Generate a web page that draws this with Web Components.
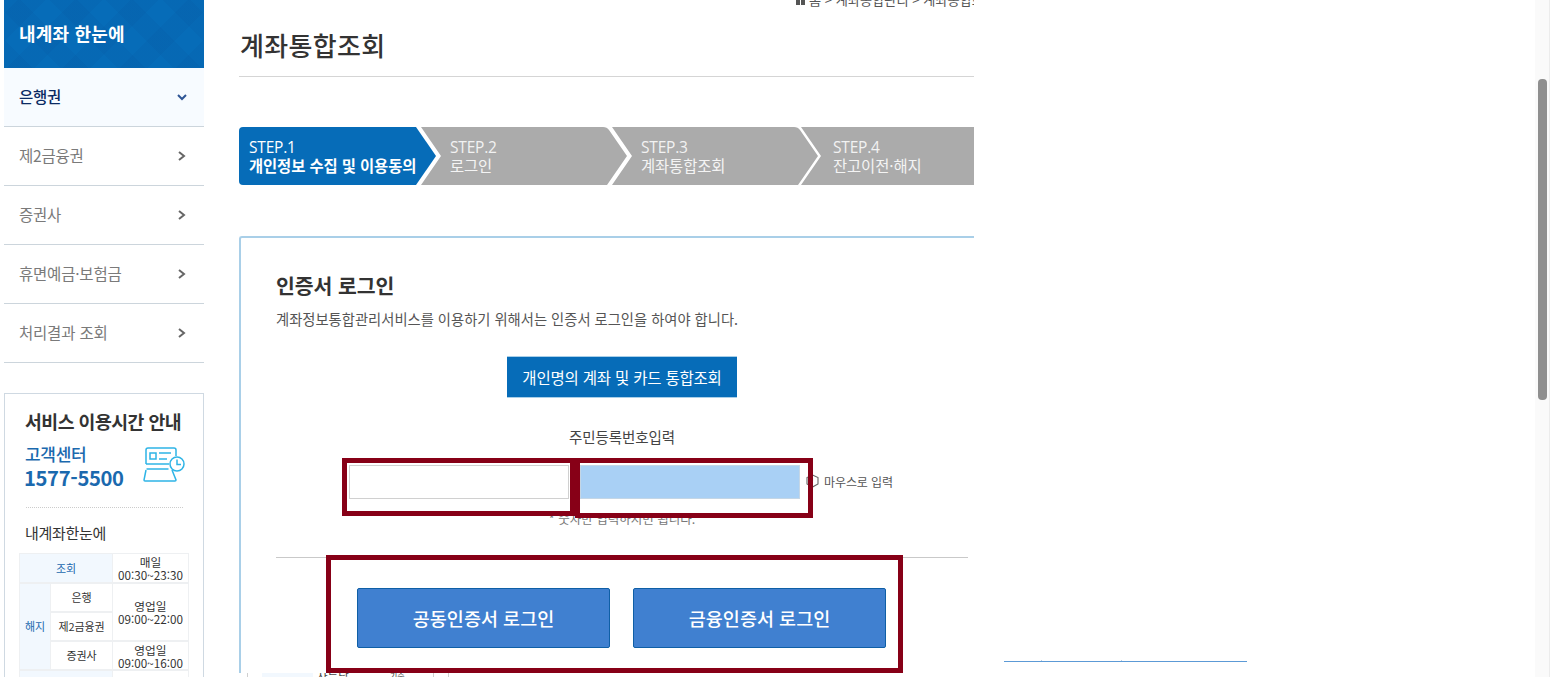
<!DOCTYPE html>
<html lang="ko"><head><meta charset="utf-8"><title>계좌통합조회</title>
<style>
html,body{margin:0;padding:0;height:677px;overflow:hidden;background:#fff;font-family:"Noto Sans CJK KR","Noto Sans",sans-serif;color:#333}
body{display:flex;align-items:flex-start}
</style></head><body>
<side-nav>
  <nav-item open>은행권</nav-item>
  <nav-item>제2금융권</nav-item>
  <nav-item>증권사</nav-item>
  <nav-item>휴면예금·보험금</nav-item>
  <nav-item>처리결과 조회</nav-item>
  <service-box></service-box>
</side-nav>
<main-area>
  <step-bar>
    <step-item n="1" active>개인정보 수집 및 이용동의</step-item>
    <step-item n="2">로그인</step-item>
    <step-item n="3">계좌통합조회</step-item>
    <step-item n="4" last>잔고이전·해지</step-item>
  </step-bar>
  <login-panel></login-panel>
  <bottom-strip></bottom-strip>
  <red-frame style="left:103px;top:458px;width:233px;height:58px"></red-frame>
  <red-frame style="left:336px;top:458px;width:238px;height:60px"></red-frame>
  <red-frame style="left:87px;top:555px;width:577px;height:118px"></red-frame>
</main-area>
<right-pane></right-pane>
<script>
function def(name,html){
  customElements.define(name,class extends HTMLElement{
    constructor(){super();const s=this.attachShadow({mode:'open'});s.innerHTML=html;}
  });
}
def('side-nav',`<style>
:host{display:block;width:200px;margin-left:4px;flex:none;height:677px;overflow:hidden}
.h{height:68px;box-sizing:border-box;padding:0 0 2px 15px;display:flex;align-items:center;color:#fff;font-size:18px;font-weight:700;letter-spacing:.2px;
background-color:#066cb8;background-image:repeating-linear-gradient(45deg,rgba(0,60,130,.07) 0 20px,transparent 20px 40px),repeating-linear-gradient(-45deg,rgba(0,60,130,.07) 0 20px,transparent 20px 40px)}
</style><div class="h">내계좌 한눈에</div><slot></slot>`);
class NavItem extends HTMLElement{
  constructor(){super();const s=this.attachShadow({mode:'open'});
  const open=this.hasAttribute('open');
  s.innerHTML=`<style>
  :host{display:flex;align-items:center;justify-content:space-between;height:59px;box-sizing:border-box;border-bottom:1px solid #ccd5dc;padding:0 17px 2px 15px;font-size:15.500px;letter-spacing:-.2px;color:${open?'#0b2a63':'#7a7a7a'};font-weight:${open?500:400};background:${open?'#f7fbff':'#fff'}}
  svg{display:block;width:10px;height:12px;margin-top:2px}
  </style><slot></slot>
  <svg viewBox="0 0 10 12">${open?'<path d="M1 4l4 4 4-4" fill="none" stroke="#2f5595" stroke-width="2"/>':'<path d="M2 2l5 4-5 4" fill="none" stroke="#666" stroke-width="2"/>'}</svg>`;}
}
customElements.define('nav-item',NavItem);
def('service-box',`<style>
:host{display:block;margin-top:30px;box-sizing:border-box;height:330px;border:1px solid #cfd9e2;border-width:1.5px;padding:0 14px;background:#fff}
.t{font-size:18.300px;font-weight:700;letter-spacing:-.5px;color:#333;margin:14px 0 0 6px;line-height:26px;white-space:nowrap}
.c{display:flex;justify-content:space-between;margin:10px 4px 0 6px}
.c1{font-size:17px;font-weight:500;color:#1b69ae;line-height:20px;letter-spacing:-.3px}
.c2{font-size:20.200px;font-weight:700;color:#1b69ae;line-height:26px;margin:1px 0 0 -1px;letter-spacing:-.35px}
svg{display:block;width:42px;height:36px;margin-top:3px}
.d{border-top:1px dotted #ccc;margin:16px 6px 0 7px}
.s{font-size:15px;color:#333;line-height:20px;margin:15px 0 0 6px;letter-spacing:-.3px}
.g{display:grid;grid-template-columns:30px 61px 75px;grid-template-rows:28px 27px 27px 27px 40px;gap:2px 1px;background:#eef0f2;padding:1px;margin:10px 0 0 0;width:168px;font-size:11px;line-height:13px;color:#333;text-align:center;letter-spacing:-.1px}
.g div{background:#fff;display:flex;align-items:center;justify-content:center}
.g .w{font-size:11.700px;letter-spacing:0}
.g .b{background:#f2f8fe;color:#1b69ae}
</style>
<div class="t">서비스 이용시간 안내</div>
<div class="c"><div><div class="c1">고객센터</div><div class="c2">1577-5500</div></div>
<svg viewBox="0 0 42 36" fill="none" stroke="#2eb4e6" stroke-width="1.500"><path d="M3 17V3q0-2 2-2h26q2 0 2 2v6"/><path d="M3 17h23"/><rect x="7" y="6" width="6" height="6"/><path d="M16 6h12M16 12h8"/><path d="M3.500 22h22M29 23l4 10q0 1-1 1H2q-1 0-1-1l2-10"/><circle cx="34" cy="17" r="7" fill="#fff"/><path d="M34 12.500V17.500h4"/></svg></div>
<div class="d"></div>
<div class="s">내계좌한눈에</div>
<div class="g">
<div class="b" style="grid-area:1/1/2/3">조회</div><div class="w" style="grid-area:1/3/2/4">매일<br>00:30~23:30</div>
<div class="b" style="grid-area:2/1/5/2">해지</div>
<div style="grid-area:2/2/3/3">은행</div>
<div class="w" style="grid-area:2/3/4/4">영업일<br>09:00~22:00</div>
<div style="grid-area:3/2/4/3">제2금융권</div>
<div style="grid-area:4/2/5/3">증권사</div>
<div class="w" style="grid-area:4/3/5/4">영업일<br>09:00~16:00</div>
<div class="b" style="grid-area:5/1/6/3"></div><div style="grid-area:5/3/6/4"></div>
</div>`);
def('main-area',`<style>
:host{display:block;position:relative;flex:none;width:735px;height:677px;margin-left:35px;overflow:hidden}
.bc{display:flex;align-items:center;gap:3px;height:14px;margin:-7px 0 0 557px;font-size:13.200px;color:#555;white-space:nowrap;line-height:14px}
.bc i{display:block;flex:none;width:4px;height:9px;background:#555;box-shadow:5px 0 #555;margin-right:6px}
h1{margin:-1px 0 0;font-size:26px;font-weight:500;line-height:36px;color:#333;padding:21px 0 13px 1px;border-bottom:1px solid #d5d5d5;letter-spacing:.35px}
</style>
<div class="bc"><i></i>홈 &gt; 계좌통합관리 &gt; 계좌통합조회</div>
<h1>계좌통합조회</h1>
<slot></slot>`);
def('step-bar',`<style>:host{display:flex;margin-top:50px;height:58px}</style><slot></slot>`);
class StepItem extends HTMLElement{
  constructor(){super();const s=this.attachShadow({mode:'open'});
  const n=this.getAttribute('n'),active=n==='1',last=this.hasAttribute('last');
  const clip=active?"M4 0H177L197 29L177 58H4Q0 58 0 54V4Q0 0 4 0Z":
    last?"M0 0H300V58H0L20 29Z":"M0 0H182Q186 0 188 3L206 29L186 58H0L20 29Z";
  const w=active?197:last?300:206;
  const ml={1:0,2:-15,3:-15,4:-17}[n];
  const pl=active?10:last?32:29;
  s.innerHTML=`<style>:host{display:block;flex:none;box-sizing:border-box;width:${w}px;height:58px;margin-left:${ml}px;padding:11px 0 0 ${pl}px;background:${active?'#066cb8':'#ababab'};color:#fff;clip-path:path('${clip}');font-size:15.400px;line-height:18px;white-space:nowrap;letter-spacing:-.1px}
  .n{font-family:"Open Sans","Noto Sans",sans-serif;font-size:15.500px;letter-spacing:-.2px;color:${active?'#fff':'#f2f2f2'}}
  .l{font-weight:${active?700:400};color:${active?'#fff':'#f4f4f4'}}</style>
  <div class="n">STEP.${n}</div><div class="l"><slot></slot></div>`;}
}
customElements.define('step-item',StepItem);
def('login-panel',`<style>
:host{display:block;box-sizing:border-box;width:800px;height:437px;margin-top:51px;border:solid #a9cfe8;border-width:2px 0 0 2px;border-top-left-radius:3px;padding:33px 0 0 35px;overflow:hidden;background:#fff}
h2{margin:0;font-size:20.500px;font-weight:700;line-height:28px;color:#333;letter-spacing:-.1px}
p{margin:10px 0 0;font-size:14.300px;line-height:20px;color:#555;letter-spacing:0;white-space:nowrap}
.bb{box-sizing:border-box;width:230px;height:42px;margin:27px 0 0 231px;background:#066cb8;border:solid #a9cfe8;border-width:1px 0;color:#fff;font-size:15.500px;display:flex;align-items:center;justify-content:center;letter-spacing:-.2px;white-space:nowrap}
.lab{text-align:center;width:692px;margin-top:29px;font-size:14.500px;line-height:20px;color:#444;letter-spacing:-.1px}
.row{display:flex;align-items:center;margin:18px 0 0 73px}
.in{box-sizing:border-box;width:220px;height:34px;border:1px solid #d0d0d0;background:#fff}
.in.b{margin-left:11px;background:#a9d0f5;border-color:#c4d6e6}
.m{display:flex;align-items:center;gap:5px;margin:-2px 0 0 6px;font-size:12px;color:#555;white-space:nowrap;letter-spacing:-.1px}
.m svg{width:13px;height:14px;display:block}
.note{width:692px;text-align:center;font-size:12.500px;line-height:14px;color:#777;margin-top:13px}
hr{border:0;border-top:1px solid #c9c9c9;width:692px;margin:31px 0 0}
.bt{display:flex;gap:23px;margin:30px 0 0 81px}
.bt div{box-sizing:border-box;width:253px;height:60px;background:#4080d0;border:1px solid #0f5fa6;border-radius:2px;color:#fff;font-size:18.500px;display:flex;align-items:center;justify-content:center;font-weight:500}
</style>
<h2>인증서 로그인</h2>
<p>계좌정보통합관리서비스를 이용하기 위해서는 인증서 로그인을 하여야 합니다.</p>
<div class="bb">개인명의 계좌 및 카드 통합조회</div>
<div class="lab">주민등록번호입력</div>
<div class="row"><div class="in"></div><div class="in b"></div>
<div class="m"><svg viewBox="0 0 13 14" fill="none" stroke="#666" stroke-width="1.100"><path d="M6.500 1L12 3.500V10L6.500 13 1 10V3.500z"/><path d="M6.500 4v3"/></svg>마우스로 입력</div></div>
<div class="note">* 숫자만 입력하시면 됩니다.</div>
<hr>
<div class="bt"><div>공동인증서 로그인</div><div>금융인증서 로그인</div></div>`);
def('bottom-strip',`<style>
:host{display:flex;height:4px;overflow:hidden;font-size:11.500px;line-height:12px;color:#444;margin-top:0;background:#fff}
.l{flex:none;width:1px;height:4px;background:#cfcfcf}
.c{flex:none;width:51px;height:4px;background:#f2f8fe;margin:0 4px 0 14px}
.t{flex:none;width:37px;margin-top:-3px;white-space:nowrap}
.u{flex:none;margin:-3px 0 0 36px;width:43px;font-size:8px;white-space:nowrap}
</style><div class="l" style="margin-left:8px"></div><div class="c"></div><div class="t">사는날</div><div class="u">기준</div><div class="l"></div><div class="l" style="margin-left:14px"></div>`);
def('red-frame',`<style>:host{position:absolute;box-sizing:border-box;border:5px solid #870017;display:block;pointer-events:none}</style>`);
def('right-pane',`<style>
:host{display:flex;flex:1;height:677px;position:relative;justify-content:flex-end;background:#fff}
.rule{position:absolute;left:30px;top:661px;width:243px;height:1px;background:#5c9ad6}
.tick{position:absolute;top:660px;width:1px;height:1px;background:#b9cfe4}
.track{box-sizing:border-box;width:15px;height:677px;background:#fafafa;padding:79px 3px 0;margin-right:3px;border-right:1px solid #ececec}
.thumb{width:9px;height:321px;border-radius:4px;background:#8f8f8f}
</style><div class="rule"></div><div class="tick" style="left:67px"></div><div class="tick" style="left:147px"></div><div class="track"><div class="thumb"></div></div>`);
</script>
</body></html>
